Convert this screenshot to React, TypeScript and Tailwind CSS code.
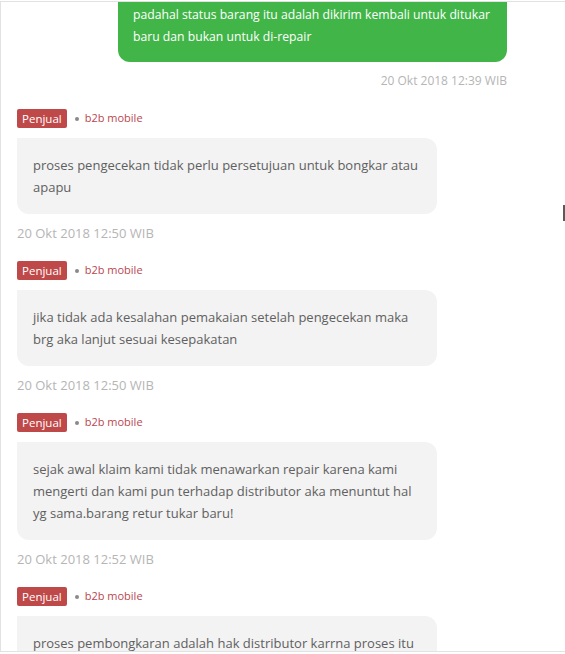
import React from 'react';

interface Message {
  text: string;
  time: string;
}

const SELLER_MESSAGES: Message[] = [
  { text: 'proses pengecekan tidak perlu persetujuan untuk bongkar atau apapu', time: '20 Okt 2018 12:50 WIB' },
  { text: 'jika tidak ada kesalahan pemakaian setelah pengecekan maka brg aka lanjut sesuai kesepakatan', time: '20 Okt 2018 12:50 WIB' },
  {
    text: 'sejak awal klaim kami tidak menawarkan repair karena kami mengerti dan kami pun terhadap distributor aka menuntut hal yg sama.barang retur tukar baru!',
    time: '20 Okt 2018 12:52 WIB',
  },
  { text: 'proses pembongkaran adalah hak distributor karrna proses itu wajib dilakukan', time: '' },
];

const SellerMessage: React.FC<{ message: Message }> = ({ message }) => (
  <div className="flex flex-col items-start">
    <div className="flex items-center h-[19px]">
      <span className="bg-[#bf4949] text-white text-[11.5px] leading-[19px] px-[5px] rounded-[2px]">Penjual</span>
      <span className="w-[4px] h-[4px] rounded-full bg-[#8a8a8a] ml-[8px]" />
      <span className="text-[11px] text-[#b9464f] ml-[6px]">b2b mobile</span>
    </div>
    <div className="mt-[10px] w-[420px] bg-[#f3f3f3] rounded-xl rounded-tl-none px-[16px] py-[16px] text-[13px] leading-[22px] text-[#606060]">
      {message.text}
    </div>
    {message.time && (
      <div className="mt-[9px] text-[13px] leading-[20px] text-[#b5b5b5]">{message.time}</div>
    )}
  </div>
);

export default function App() {
  return (
    <div className="relative h-[654px] w-[565px] overflow-hidden bg-white" style={{ fontFamily: '"Open Sans", sans-serif' }}>
      <div className="mt-[1px] h-[651px] overflow-hidden border-t border-b border-l border-[#e2e2e2]">
        <div className="-mt-[14px] px-4 flex flex-col gap-[18px]">
          <div className="flex flex-col items-end pr-[42px]">
            <div className="w-[389px] bg-[#42b549] rounded-xl rounded-tr-none px-[15px] pt-[16px] pb-[14px] text-[12.2px] leading-[22px] text-white whitespace-nowrap">
              padahal status barang itu adalah dikirim kembali untuk ditukar
              <br />
              baru dan bukan untuk di-repair
            </div>
            <div className="mt-[9px] text-[12px] leading-[20px] text-[#b5b5b5]">20 Okt 2018 12:39 WIB</div>
          </div>
          {SELLER_MESSAGES.map((m, i) => (
            <SellerMessage key={i} message={m} />
          ))}
        </div>
      </div>
      <div className="absolute left-[563px] top-[205px] w-[2px] h-[16px] bg-[#5a5a5a]" />
    </div>
  );
}
